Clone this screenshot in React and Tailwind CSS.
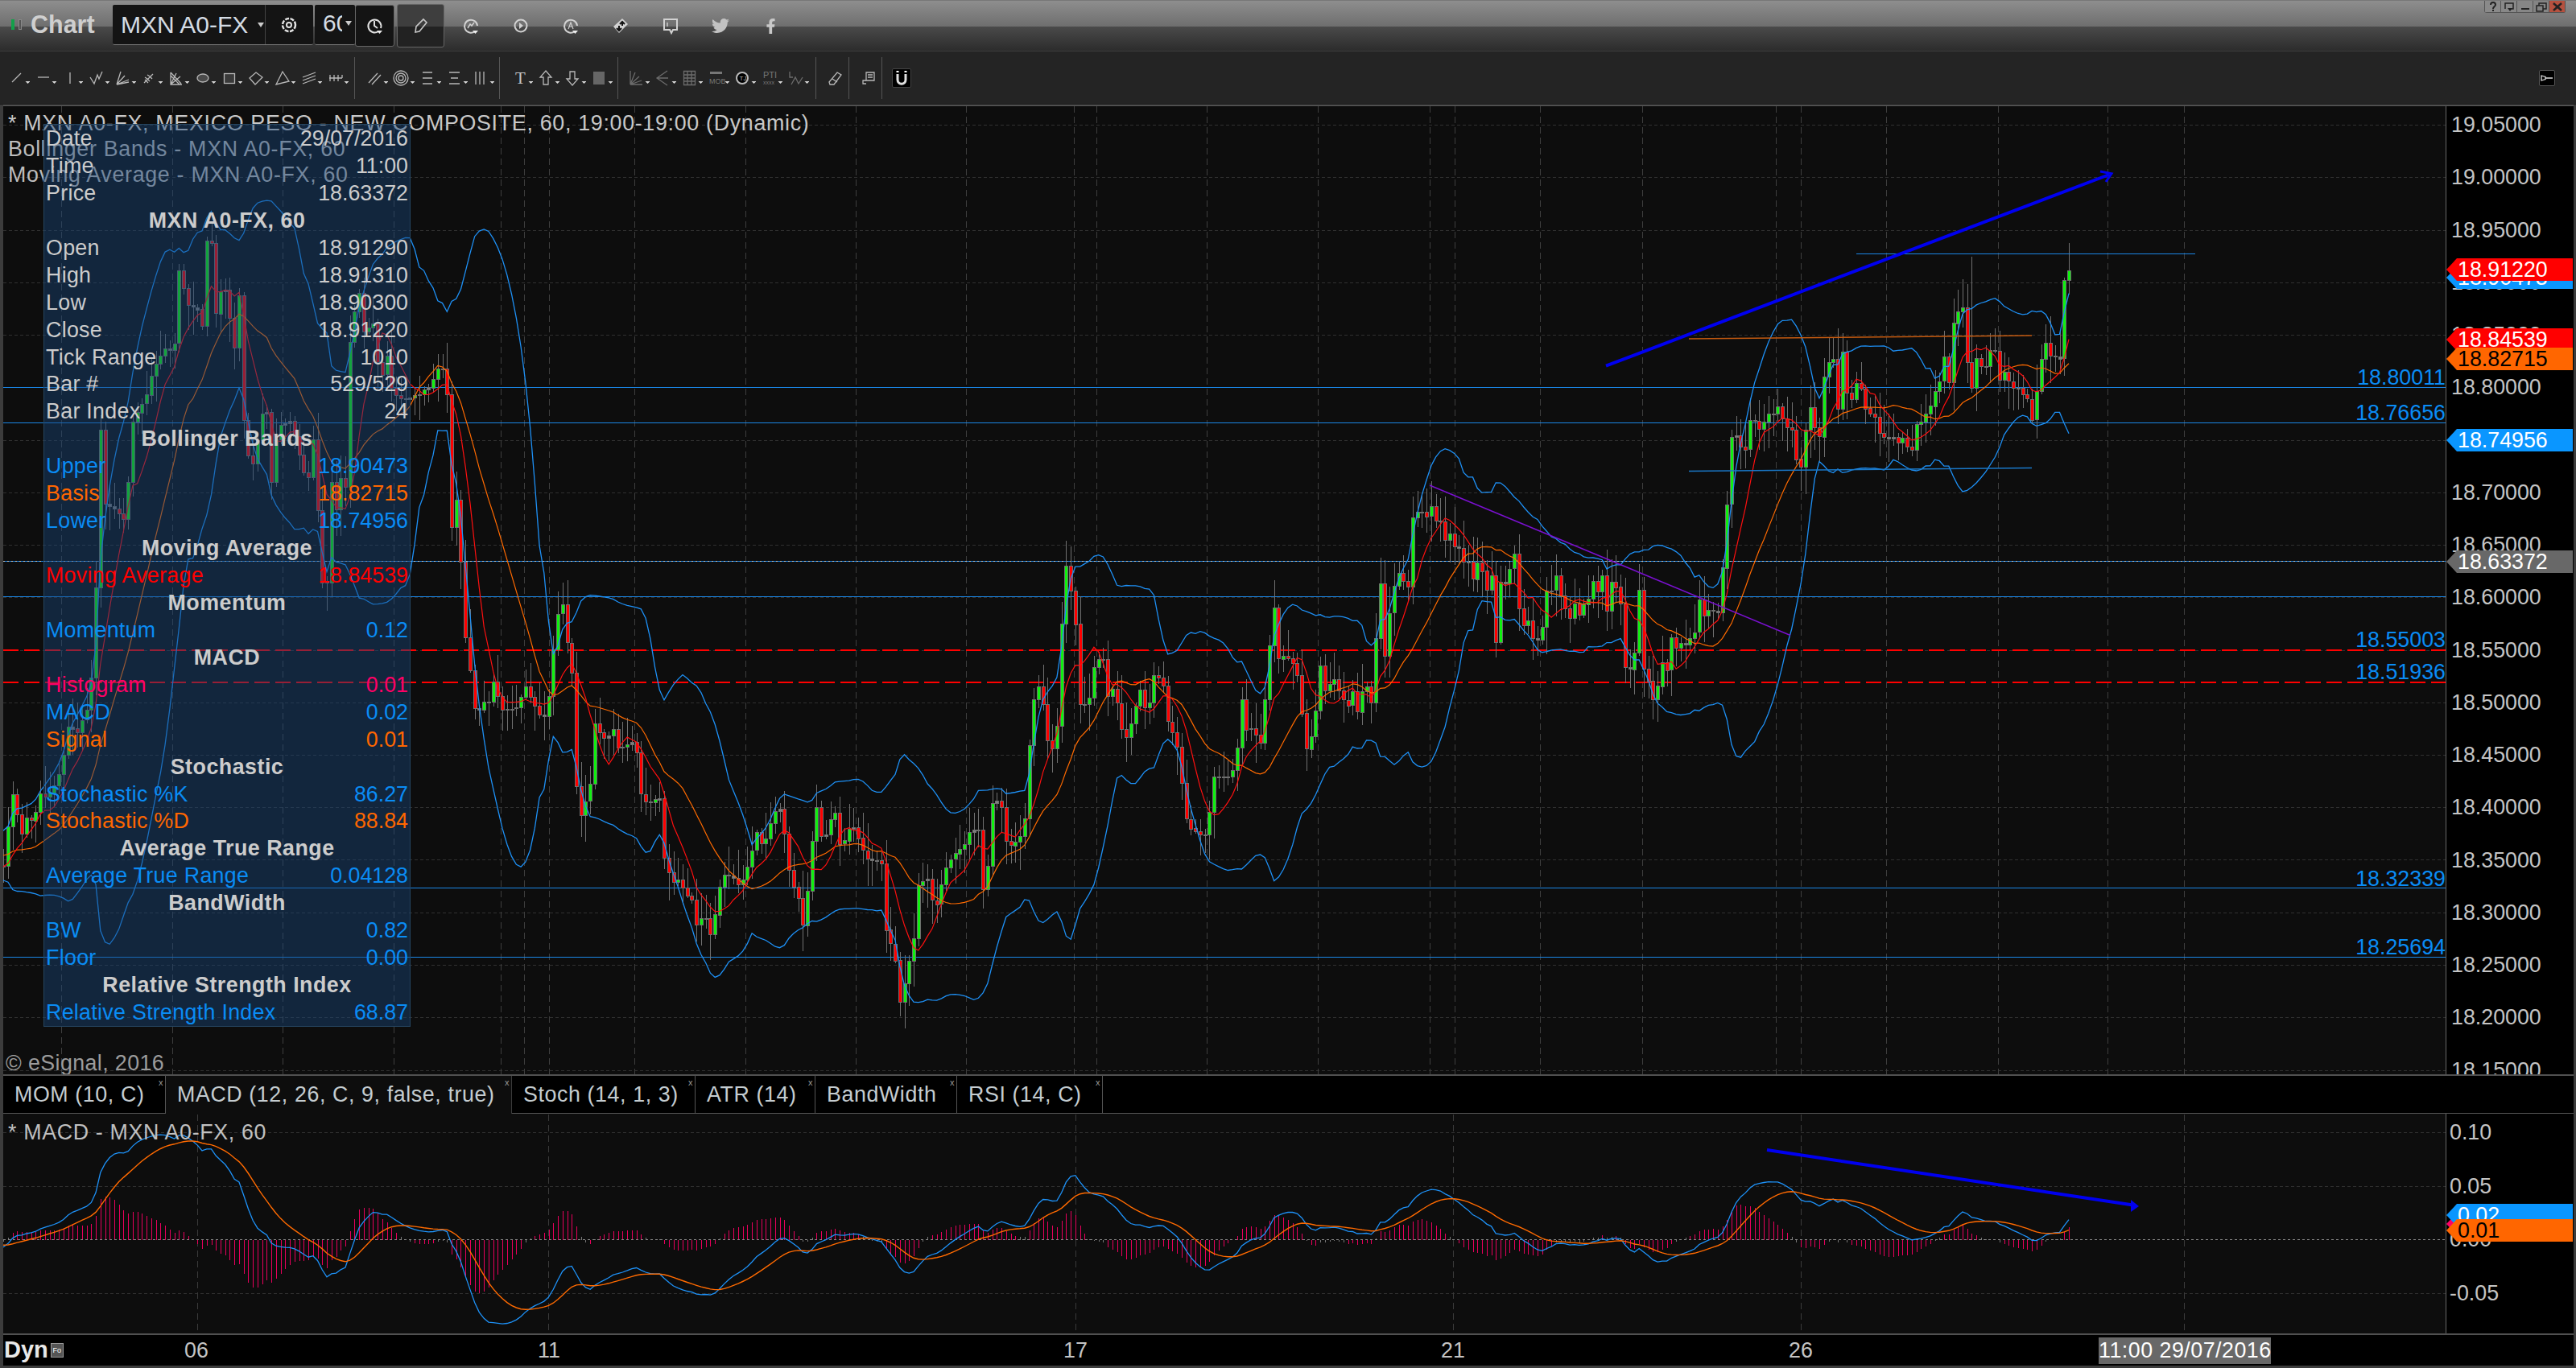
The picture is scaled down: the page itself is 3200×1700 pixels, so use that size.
import { FaTwitter, FaFacebookF } from 'react-icons/fa';

// traced closes: [x, y] in page pixels
const PATH = [[-120,1040],[-100,1060],[-80,1030],[-60,1075],[-40,1050],[-20,1090],[0,1075],[4,1078],[15,984],[27,1037],[33,1016],[39,1020],[45,1008],[50,986],[56,990],[62,985],[68,975],[74,960],[78,943],[85,900],[89,904],[96,910],[102,894],[107,886],[114,837],[119,731],[122,600],[125,528],[130,626],[143,632],[154,646],[161,583],[165,523],[182,491],[190,458],[205,433],[216,437],[222,335],[228,358],[234,380],[245,383],[252,408],[257,294],[262,294],[268,391],[274,362],[279,355],[286,398],[292,437],[297,366],[303,530],[310,576],[315,576],[326,512],[333,512],[338,617],[344,530],[355,526],[361,523],[377,587],[384,594],[389,544],[395,641],[400,723],[406,725],[411,594],[417,637],[423,594],[429,605],[435,416],[441,384],[446,362],[452,412],[464,401],[470,458],[475,466],[481,441],[487,487],[492,491],[500,496],[507,496],[513,491],[520,491],[527,484],[532,482],[539,469],[543,458],[549,455],[556,494],[561,655],[567,619],[572,690],[578,790],[584,833],[589,880],[596,882],[601,872],[607,872],[612,845],[624,882],[641,880],[653,853],[658,865],[671,890],[676,890],[682,863],[691,767],[699,751],[703,790],[710,830],[716,977],[722,1014],[733,977],[740,885],[746,917],[754,917],[763,905],[768,931],[779,925],[789,920],[796,986],[803,997],[810,997],[819,988],[825,1066],[835,1097],[844,1092],[851,1112],[859,1115],[865,1149],[875,1135],[883,1163],[889,1132],[895,1095],[900,1086],[910,1089],[918,1100],[925,1089],[934,1057],[942,1026],[947,1057],[958,1020],[967,997],[974,1034],[981,1089],[986,1103],[993,1120],[1000,1169],[1004,1086],[1014,1000],[1023,1057],[1028,1023],[1039,1008],[1044,1057],[1056,1026],[1061,1028],[1072,1057],[1079,1069],[1090,1069],[1098,1075],[1101,1169],[1110,1175],[1118,1247],[1125,1215],[1135,1166],[1141,1097],[1153,1092],[1161,1135],[1170,1097],[1176,1075],[1184,1063],[1198,1049],[1205,1031],[1216,1031],[1221,1106],[1230,1060],[1233,988],[1244,1003],[1251,1054],[1265,1043],[1272,1029],[1278,931],[1285,862],[1293,848],[1300,917],[1307,931],[1314,897],[1319,767],[1325,696],[1336,776],[1342,882],[1353,868],[1360,822],[1370,816],[1376,865],[1384,853],[1393,905],[1400,917],[1416,856],[1425,891],[1433,839],[1444,845],[1451,899],[1461,919],[1468,974],[1472,1014],[1479,1029],[1496,1040],[1503,1006],[1508,965],[1514,965],[1524,967],[1535,951],[1542,865],[1549,911],[1556,903],[1565,928],[1572,862],[1577,802],[1583,753],[1589,825],[1595,813],[1606,824],[1611,835],[1617,885],[1624,939],[1634,887],[1640,826],[1646,858],[1652,849],[1657,843],[1663,858],[1669,870],[1675,877],[1680,858],[1686,885],[1692,858],[1698,853],[1703,877],[1709,793],[1715,722],[1721,824],[1726,763],[1732,728],[1738,711],[1743,721],[1749,732],[1755,642],[1761,636],[1767,636],[1772,642],[1778,629],[1784,648],[1790,648],[1795,671],[1801,663],[1807,680],[1812,680],[1818,698],[1824,698],[1830,721],[1835,698],[1841,709],[1847,734],[1853,713],[1858,801],[1864,723],[1870,725],[1876,705],[1881,686],[1887,757],[1893,778],[1899,770],[1904,793],[1910,795],[1916,778],[1921,734],[1927,734],[1933,715],[1939,742],[1944,755],[1950,768],[1956,749],[1962,765],[1967,751],[1973,744],[1979,721],[1985,736],[1990,713],[1996,759],[2002,721],[2008,730],[2013,747],[2019,830],[2025,832],[2031,809],[2036,730],[2042,832],[2048,847],[2053,870],[2059,853],[2065,822],[2071,833],[2076,791],[2082,805],[2088,799],[2094,801],[2099,793],[2105,786],[2111,744],[2117,767],[2122,758],[2128,759],[2134,761],[2140,700],[2145,630],[2151,543],[2157,541],[2163,556],[2168,560],[2174,522],[2180,523],[2186,534],[2191,524],[2197,514],[2203,514],[2209,504],[2214,520],[2220,531],[2226,534],[2232,575],[2237,581],[2243,533],[2249,504],[2255,535],[2260,543],[2266,465],[2272,449],[2278,446],[2283,508],[2289,434],[2295,493],[2300,497],[2306,476],[2312,483],[2318,510],[2323,514],[2329,518],[2335,539],[2341,543],[2347,545],[2352,543],[2358,550],[2364,543],[2369,555],[2375,559],[2381,525],[2387,524],[2392,514],[2398,504],[2404,484],[2409,475],[2415,443],[2420,485],[2427,395],[2432,387],[2438,382],[2443,445],[2449,485],[2455,445],[2461,455],[2466,458],[2472,435],[2478,435],[2484,473],[2489,461],[2495,473],[2501,482],[2507,482],[2512,490],[2518,494],[2524,522],[2530,485],[2536,443],[2541,425],[2547,442],[2553,443],[2559,446],[2564,349],[2570,336]];

const STEP = 5.74;
const LAST_X = 2570;

function closeAt(x) {
  for (let i = 1; i < PATH.length; i++) {
    if (x <= PATH[i][0]) {
      const [x0, y0] = PATH[i - 1];
      const [x1, y1] = PATH[i];
      return y0 + ((y1 - y0) * (x - x0)) / (x1 - x0);
    }
  }
  return PATH[PATH.length - 1][1];
}

function noise(i) {
  const s = Math.sin(i * 12.9898) * 43758.5453;
  return s - Math.floor(s);
}

// the few wicks that stand out in the picture: [x, high y]
const TALL_WICKS = [[2570, 302], [2449, 319], [1325, 672], [2283, 408], [2145, 610]];

const bars = [];
for (let x = LAST_X; x >= -120; x -= STEP) bars.unshift({ x, close: closeAt(x) });
bars.forEach((b, i) => {
  b.open = i ? bars[i - 1].close : b.close;
  b.high = Math.min(b.open, b.close) - 3 - noise(i) * 32;
  b.low = Math.max(b.open, b.close) + 3 + noise(i + 700) * 32;
  TALL_WICKS.forEach(([x, y]) => {
    if (Math.abs(b.x - x) < 3) b.high = y;
  });
});

function sma(i, n) {
  let sum = 0;
  const from = Math.max(0, i - n + 1);
  for (let k = from; k <= i; k++) sum += bars[k].close;
  return sum / (i - from + 1);
}

function std(i, n, mean) {
  let sum = 0;
  const from = Math.max(0, i - n + 1);
  for (let k = from; k <= i; k++) sum += (bars[k].close - mean) ** 2;
  return Math.sqrt(sum / (i - from + 1));
}

function ema(values, n) {
  const k = 2 / (n + 1);
  const out = [];
  values.forEach((v, i) => out.push(i ? v * k + out[i - 1] * (1 - k) : v));
  return out;
}

const prices = bars.map((b) => 19.05 - (b.close - 155) / 1305);
const fast = ema(prices, 12);
const slow = ema(prices, 26);
const macd = fast.map((v, i) => v - slow[i]);
const signal = ema(macd, 12);
const macdY = (v) => 1540.5 - v * 1334;

const toPoints = (fn) => bars.map((b, i) => `${b.x.toFixed(1)},${fn(b, i).toFixed(1)}`).join(' ');

const basisPts = toPoints((b, i) => sma(i, 20));
const upperPts = toPoints((b, i) => { const m = sma(i, 20); return m - 2 * std(i, 20, m); });
const lowerPts = toPoints((b, i) => { const m = sma(i, 20); return m + 2 * std(i, 20, m); });
const maPts = toPoints((b, i) => sma(i, 8));
const macdPts = toPoints((b, i) => macdY(macd[i]));
const signalPts = toPoints((b, i) => macdY(signal[i]));

const VERTICALS = [76, 214, 351, 489, 622, 651, 682, 788, 926, 1063, 1200, 1334, 1362, 1499, 1637, 1776, 1807, 1913, 2040, 2206, 2237, 2343, 2482, 2618, 2713];
const MACD_VERTICALS = [245, 681, 1336, 1805, 2237, 2713];

const TICKS = ['19.05000', '19.00000', '18.95000', '18.90000', '18.85000', '18.80000', '18.75000', '18.70000', '18.65000', '18.60000', '18.55000', '18.50000', '18.45000', '18.40000', '18.35000', '18.30000', '18.25000', '18.20000', '18.15000'];
const priceY = (p) => 155 + (19.05 - p) * 1305;

const LEVELS = [
  ['18.80011', 469],
  ['18.76656', 513],
  ['18.55003', 795],
  ['18.51936', 835],
  ['18.32339', 1092],
  ['18.25694', 1177],
];

const BLUE = 'text-[#0a8cf5]';
const ROWS = [
  ['Date', '29/07/2016'],
  ['Time', '11:00'],
  ['Price', '18.63372'],
  ['MXN A0-FX, 60'],
  ['Open', '18.91290'],
  ['High', '18.91310'],
  ['Low', '18.90300'],
  ['Close', '18.91220'],
  ['Tick Range', '1010'],
  ['Bar #', '529/529'],
  ['Bar Index', '24'],
  ['Bollinger Bands'],
  ['Upper', '18.90473', BLUE],
  ['Basis', '18.82715', 'text-[#ff6600]'],
  ['Lower', '18.74956', BLUE],
  ['Moving Average'],
  ['Moving Average', '18.84539', 'text-[#ff0000]'],
  ['Momentum'],
  ['Momentum', '0.12', BLUE],
  ['MACD'],
  ['Histogram', '0.01', 'text-[#ff0066]'],
  ['MACD', '0.02', BLUE],
  ['Signal', '0.01', 'text-[#ff6600]'],
  ['Stochastic'],
  ['Stochastic %K', '86.27', BLUE],
  ['Stochastic %D', '88.84', 'text-[#ff6600]'],
  ['Average True Range'],
  ['Average True Range', '0.04128', BLUE],
  ['BandWidth'],
  ['BW', '0.82', BLUE],
  ['Floor', '0.00', BLUE],
  ['Relative Strength Index'],
  ['Relative Strength Index', '68.87', BLUE],
];

const TABS = [
  ['MOM (10, C)', 'w-[202px]'],
  ['MACD (12, 26, C, 9, false, true)', 'w-[430px]', true],
  ['Stoch (14, 1, 3)', 'w-[228px]'],
  ['ATR (14)', 'w-[149px]'],
  ['BandWidth', 'w-[176px]'],
  ['RSI (14, C)', 'w-[181px]'],
];

const Line = (props) => <line stroke="currentColor" {...props} />;

// toolbar glyphs, 33x30 cell, centred near 16,15
const DRAW_TOOLS = [
  <path d="M11 20 22 9" />,
  <path d="M10 14H24" />,
  <path d="M17 8V22" />,
  <path d="M9 14l5 8 4-11 2 5 4-9" />,
  <path d="M9 23 14 7M9 23 19 12M9 23 24 17M9 23 24 20" />,
  <path d="M10 21 21 10M11 14l3 2 3 3M14 11l3 2 3 3M15 21l-4-4" />,
  <path d="M10 8V23H24M10 8 23 22M10 12 21 23M10 23 17 9M10 23 22 13" />,
  <ellipse cx="17" cy="15" rx="7" ry="5" fill="#4a4a4a" />,
  <rect x="10.5" y="9.5" width="13" height="12" fill="#3a3a3a" />,
  <path d="M9 15 17 8 25 14 16 23Z" />,
  <path d="M17 7 25 19 9 23Z" />,
  <path d="M9 14 25 8M9 18 25 12M9 22 25 16" />,
  <path d="M9 15H25M10 11v8M15 11v8M20 11v8M25 11v4" />,
];
const FIB_TOOLS = [
  <path d="M9 21 20 9M13 23 24 11" />,
  <g><circle cx="16" cy="15" r="9" /><circle cx="16" cy="15" r="6" /><circle cx="16" cy="15" r="3" /></g>,
  <path d="M10 8H22M10 15H22M10 22H22" />,
  <path d="M10 8H23M12 15H21M10 22H23" />,
  <path d="M10 7V23M15 7V23M20 7V23" />,
];
const NOTE_TOOLS = [
  <text x="11" y="22" fontSize="21" fill="#c4c4c4" stroke="none" fontFamily="Liberation Serif, serif">T</text>,
  <path d="M16 6 23 14H19V23H13V14H9Z" />,
  <path d="M16 24 23 16H19V7H13V16H9Z" />,
  <rect x="9" y="7" width="14" height="16" fill="#666" stroke="none" />,
];
const DIM_TOOLS = [
  <path d="M9 23V6M9 23H24M9 23 15 8M9 23 20 13M9 23 23 18" />,
  <path d="M22 6 9 15 22 24M9 15H23" />,
  <path d="M9.5 6.5H23.5V23.5H9.5ZM14 7V23M19 7V23M10 11H23M10 15H23M10 19H23" />,
  <g><rect x="9" y="7" width="15" height="3" fill="#777" stroke="none" /><text x="8" y="22" fontSize="9" fill="#777" stroke="none">MOB</text></g>,
  <g><circle cx="16" cy="15" r="7" fill="#000" stroke="#bbb" strokeWidth="2" /><text x="12.5" y="18" fontSize="8" fill="#bbb" stroke="none">TJ</text></g>,
  <g><text x="9" y="15" fontSize="11" fill="#777" stroke="none">PTI</text><text x="9" y="23" fontSize="7" fill="#777" stroke="none">xxxx</text></g>,
  <path d="M9 7V14H13M11 23 16 14 20 22 25 14" />,
];

function ToolCell({ children, arrow = true, dim = false }) {
  return (
    <svg width="33" height="30" viewBox="0 0 33 30" className="shrink-0" fill="none" stroke={dim ? '#6c6c6c' : '#b8b8b8'} strokeWidth="1.3">
      {children}
      {arrow && <path d="M28 20h6l-3 3z" fill="#d8d8d8" stroke="none" transform="translate(-0.5 -1)" />}
    </svg>
  );
}

const Sep = ({ className = '' }) => <div className={`w-px h-[52px] bg-[#555] shrink-0 ${className}`} />;

function TitleIcon({ children, arrow }) {
  return (
    <div className="w-[62px] h-[62px] flex items-center justify-center shrink-0">
      <svg width="22" height="24" viewBox="0 0 22 24" fill="none" stroke="#d2d2d2" strokeWidth="2">
        {children}
        {arrow && <path d="M13 18h7l-3.5 4z" fill="#eee" stroke="none" />}
      </svg>
    </div>
  );
}

function WinButton({ children, className = '' }) {
  return (
    <div className={`w-[20px] h-[15px] flex items-center justify-center border-r border-b border-[#555] ${className}`}>
      <svg width="16" height="13" viewBox="0 0 16 13" fill="none" stroke="#222" strokeWidth="2">{children}</svg>
    </div>
  );
}

function TitleBar() {
  return (
    <div className="flex items-start h-[64px] shrink-0 bg-[linear-gradient(#8e8e8e_0px,#6e6e6e_32px,#4a4a4a_32px,#2c2c2c_62px,#3c3c3c_62px)] border-t border-[#777]">
      <div className="flex gap-[5px] ml-[14px] mt-[23px]">
        <div className="w-[4px] h-[13px] bg-[#13a04a]" />
        <div className="w-[4px] h-[13px] bg-[#555] border border-[#888]" />
      </div>
      <div className="ml-[11px] mt-[11px] text-[30.5px] leading-[36px] font-bold text-[#cfcfcf] w-[102px]">Chart</div>
      <div className="flex items-center w-[249px] h-[50px] mt-[5px] bg-[#141414] border-b border-[#777] rounded-[2px] overflow-hidden">
        <div className="w-[180px] pl-[10px] text-[30px] text-[#d4dce4] whitespace-nowrap">MXN A0-FX</div>
        <svg width="8" height="6" viewBox="0 0 8 6"><path d="M0 0h8L4 6z" fill="#ccc" /></svg>
        <div className="w-px h-full bg-[#444] ml-[1px]" />
        <svg className="ml-[16px]" width="26" height="26" viewBox="0 0 26 26" fill="none" stroke="#e4e4e4" strokeWidth="2.5">
          <circle cx="13" cy="13" r="8" strokeDasharray="5 1.5" />
          <circle cx="13" cy="13" r="3" strokeWidth="2" />
        </svg>
      </div>
      <div className="relative w-[50px] h-[50px] mt-[5px] ml-[2px] bg-[#141414] border-b border-[#777] rounded-[2px] pl-[10px] text-[30px] text-[#d4dce4]">
        <div className="w-[24px] overflow-hidden">60</div>
        <svg className="absolute right-[4px] top-[20px]" width="8" height="6" viewBox="0 0 8 6"><path d="M0 0h8L4 6z" fill="#ccc" /></svg>
      </div>
      <div className="w-[49px] h-[52px] mt-[5px] bg-[#141414] border border-[#666] rounded-[3px] flex items-center justify-center">
        <svg width="22" height="24" viewBox="0 0 22 24" fill="none" stroke="#e0e0e0" strokeWidth="2">
          <path d="M15 19A8 8 0 1 1 18 15" />
          <path d="M10 6v6l4 3" />
          <path d="M13 18h7l-3.5 4z" fill="#eee" stroke="none" />
        </svg>
      </div>
      <div className="w-[59px] h-[54px] mt-[4px] ml-[3px] bg-[linear-gradient(#3e3e3e_0px,#3e3e3e_27px,#222_27px,#222_54px)] border border-[#666] rounded-[3px] flex items-center justify-center">
        <svg width="18" height="20" viewBox="0 0 18 20" fill="none" stroke="#c8c8c8" strokeWidth="1.6">
          <path d="M2 18 3 11 12 2 16 6 7 17Z" />
        </svg>
      </div>
      <div className="flex ml-[2px]">
        <TitleIcon arrow><path d="M16 19A8 8 0 1 1 19 12" /><path d="M7 15l3-5 2 2 3-4" strokeWidth="1.5" /></TitleIcon>
        <TitleIcon><circle cx="11" cy="12" r="7.5" /><path d="M9 8l5 4-5 4z" fill="#d2d2d2" stroke="none" /></TitleIcon>
        <TitleIcon arrow><path d="M16 19A8 8 0 1 1 19 12" /><path d="M8 16l3-8 3 8M9 13h4" strokeWidth="1.2" /></TitleIcon>
        <TitleIcon><path d="M2 13 13 3 20 10 9 21Z" fill="#d2d2d2" stroke="none" /><path d="M13 7v5M10 10l3-3 3 3M9 12v5M6 15l3 3 3-3" stroke="#111" strokeWidth="2" /></TitleIcon>
        <TitleIcon><path d="M3 4H19V17H14L12 21 10 17H3Z" /><path d="M7 8v5" strokeWidth="1.4" /></TitleIcon>
        <div className="w-[62px] h-[62px] flex items-center justify-center shrink-0 text-[#c2c2c2]"><FaTwitter size={22} /></div>
        <div className="w-[62px] h-[62px] flex items-center justify-center shrink-0 text-[#c8c8c8]"><FaFacebookF size={19} /></div>
      </div>
      <div className="ml-auto mr-[13px] flex rounded-b-[3px] overflow-hidden border-l border-[#555]">
        <WinButton className="bg-[#8a8a8a]"><path d="M5 4c0-4 6-4 6 0 0 2-3 2-3 5M8 10v2" /></WinButton>
        <WinButton className="bg-[#888]"><path d="M3 9V2H13V9H10" strokeWidth="1.5" /><path d="M6 8h6l-3 4z" fill="#222" stroke="none" /></WinButton>
        <WinButton className="bg-[#868686]"><path d="M3 9H13" /></WinButton>
        <WinButton className="bg-[#848484]"><path d="M2 5H10V12H2ZM5 5V2H14V9H10" strokeWidth="1.5" /></WinButton>
        <WinButton className="bg-[#b5513f]"><path d="M3 2 13 11M13 2 3 11" strokeWidth="2.5" /></WinButton>
      </div>
    </div>
  );
}

function ToolBar() {
  return (
    <div className="flex items-center h-[66px] shrink-0 pl-[4px] pr-[26px] bg-[#242424] border-b border-[#1a1a1a]">
      {DRAW_TOOLS.map((g, i) => <ToolCell key={i}>{g}</ToolCell>)}
      <Sep className="ml-[7px] mr-[8px]" />
      {FIB_TOOLS.map((g, i) => <ToolCell key={i}>{g}</ToolCell>)}
      <Sep className="ml-[6px] mr-[8px]" />
      {NOTE_TOOLS.map((g, i) => <ToolCell key={i}>{g}</ToolCell>)}
      <Sep className="ml-[6px] mr-[6px]" />
      {DIM_TOOLS.map((g, i) => <ToolCell key={i} dim={i !== 4}>{g}</ToolCell>)}
      <Sep className="ml-[8px] mr-[7px]" />
      <ToolCell arrow={false}><path d="M9 20 19 8 24 11 15 23H10Z" /><path d="M13 16l6 4" /></ToolCell>
      <Sep className="mr-[8px]" />
      <ToolCell arrow={false}><path d="M13 8H23V18H13ZM15 11H21M15 14H21" /><path d="M13 18H9V22H13" /></ToolCell>
      <Sep className="-ml-px mr-[12px]" />
      <div className="w-[24px] h-[24px] bg-black border border-[#444] rounded-[2px] flex items-center justify-center shrink-0">
        <svg width="16" height="20" viewBox="0 0 16 20" fill="none" stroke="#e0e0e0" strokeWidth="3">
          <path d="M3 5V12C3 19 13 19 13 12V5" />
          <path d="M3 1V3M13 1V3" stroke="#fff" />
        </svg>
      </div>
      <div className="ml-auto w-[20px] h-[20px] bg-black border border-[#555] rounded-[2px] flex items-center justify-center">
        <svg width="16" height="10" viewBox="0 0 16 10" fill="none" stroke="#ddd" strokeWidth="1.3">
          <path d="M1 2 6 3.5V6.5L1 8ZM6 5H15" />
        </svg>
      </div>
    </div>
  );
}

function Candles() {
  return (
    <g shapeRendering="crispEdges">
      <path
        d={bars.map((b) => { const x = Math.round(b.x) + 0.5; return `M${x} ${b.high.toFixed(0)}V${b.low.toFixed(0)}`; }).join('')}
        stroke="#707070"
        fill="none"
      />
      {bars.map((b, i) => {
        const top = Math.min(b.open, b.close);
        const h = Math.max(1, Math.abs(b.open - b.close));
        const up = b.close < b.open;
        return (
          <rect
            key={i}
            x={Math.round(b.x) - 1.5}
            y={Math.round(top) + 0.5}
            width="4"
            height={Math.round(h)}
            fill={h < 3 ? '#808080' : up ? '#10f010' : '#ff0000'}
            stroke="#6e6e6e"
          />
        );
      })}
    </g>
  );
}

function MainChart() {
  return (
    <svg className="block w-[3034px] h-full text-[#1a86e6]" viewBox="4 132 3034 1203" fill="none">
      <g shapeRendering="crispEdges">
        {TICKS.map((t) => {
          const y = Math.round(priceY(parseFloat(t))) + 0.5;
          return <line key={t} x1="4" x2="3038" y1={y} y2={y} stroke="#303030" strokeDasharray="4 3" />;
        })}
        {VERTICALS.map((x) => (
          <line key={x} x1={x + 0.5} x2={x + 0.5} y1="132" y2="1335" stroke="#3e3e3e" strokeDasharray="8 5" />
        ))}
        <Line x1="4" x2="3038" y1="481.5" y2="481.5" />
        <Line x1="4" x2="3038" y1="525.5" y2="525.5" />
        <Line x1="4" x2="3038" y1="697.5" y2="697.5" />
        <line x1="4" x2="3038" y1="697.5" y2="697.5" stroke="#c8c8c8" strokeDasharray="2 3" />
        <Line x1="4" x2="3038" y1="741.5" y2="741.5" />
        <Line x1="4" x2="3038" y1="1103.5" y2="1103.5" />
        <Line x1="4" x2="3038" y1="1189.5" y2="1189.5" />
        <line x1="4" x2="3038" y1="808" y2="808" stroke="#ff0000" strokeWidth="2" strokeDasharray="19 7" />
        <line x1="4" x2="3038" y1="848" y2="848" stroke="#ff0000" strokeWidth="2" strokeDasharray="19 7" />
      </g>
      <Candles />
      <polyline points={upperPts} stroke="#1e90f5" strokeWidth="1.3" />
      <polyline points={lowerPts} stroke="#1e90f5" strokeWidth="1.3" />
      <polyline points={basisPts} stroke="#ff6a00" strokeWidth="1.2" />
      <polyline points={maPts} stroke="#ff1010" strokeWidth="1.2" />
      <line x1="2306" x2="2727" y1="315.5" y2="315.5" stroke="#1a86e6" />
      <line x1="2098" y1="421" x2="2524" y2="417" stroke="#c45a10" strokeWidth="1.5" />
      <line x1="2098" y1="585.5" x2="2524" y2="581.5" stroke="#1a78c8" strokeWidth="1.5" />
      <line x1="1776" y1="603" x2="2224" y2="789.5" stroke="#7a10d0" strokeWidth="1.5" />
      <line x1="1995" y1="454.6" x2="2620" y2="217" stroke="#0000f0" strokeWidth="4" />
      <path d="M2609 213 2623 215.7 2616 226" stroke="#0000f0" strokeWidth="3" />
    </svg>
  );
}

function MacdChart() {
  return (
    <svg className="block w-[3034px] h-full" viewBox="4 1384 3034 273" fill="none">
      <g shapeRendering="crispEdges">
        {[1407, 1474, 1607].map((y) => (
          <line key={y} x1="4" x2="3038" y1={y + 0.5} y2={y + 0.5} stroke="#303030" strokeDasharray="4 3" />
        ))}
        {MACD_VERTICALS.map((x) => (
          <line key={x} x1={x + 0.5} x2={x + 0.5} y1="1385" y2="1659" stroke="#3a3a3a" strokeDasharray="8 5" />
        ))}
        {bars.map((b, i) => {
          const h = (macd[i] - signal[i]) * 1.2 * 1334;
          const x = Math.round(b.x) + 0.5;
          return <line key={i} x1={x} x2={x} y1="1540.5" y2={1540.5 - h} stroke={Math.abs(h) < 4 ? '#777' : '#e8005c'} />;
        })}
        <line x1="4" x2="3038" y1="1540.5" y2="1540.5" stroke="#8a8a8a" strokeDasharray="3 3" />
      </g>
      <polyline points={macdPts} stroke="#1e92f8" strokeWidth="1.3" />
      <polyline points={signalPts} stroke="#ff6a00" strokeWidth="1.4" />
      <line x1="2195" y1="1429" x2="2653" y2="1498" stroke="#0000f0" strokeWidth="4" />
      <path d="M2647 1491 2657 1499 2647 1506Z" fill="#0000f0" />
    </svg>
  );
}

function DataPanel() {
  return (
    <div className="absolute left-[50px] top-[22px] w-[456px] bg-[rgba(24,69,120,0.45)] border border-[#25445f] pl-[2px] pr-[2px] text-[#cccccc]">
      {ROWS.map(([label, value, color], i) =>
        value ? (
          <div key={i} className={`flex justify-between h-[33.94px] leading-[34px] ${color || ''}`}>
            <span className="tracking-[0.3px]">{label}</span>
            <span>{value}</span>
          </div>
        ) : (
          <div key={i} className="h-[33.94px] leading-[34px] text-center font-bold tracking-[0.5px]">{label}</div>
        )
      )}
    </div>
  );
}

function Badge({ top, color, text = 'text-white', children }) {
  return (
    <div
      className={`absolute left-0 w-[157px] h-[28px] leading-[28px] pl-[14px] whitespace-nowrap [clip-path:polygon(13px_0,100%_0,100%_100%,13px_100%,0_50%)] ${color} ${text}`}
      style={{ top }}
    >
      {children}
    </div>
  );
}

export default function App() {
  return (
    <div className="w-[3200px] h-[1700px] flex flex-col overflow-hidden bg-black font-['Liberation_Sans',Arial,sans-serif] text-[26.8px]">
      <TitleBar />
      <ToolBar />
      <div className="flex-1 flex flex-col pl-[4px] pr-[3px] pb-[3px] bg-[#3c3c3c] min-h-0">
        {/* price pane */}
        <div className="flex h-[1207px] shrink-0 border-y-2 border-[#505050] bg-black">
          <div className="relative w-[3034px] bg-[#0d0d0d] overflow-hidden">
            <MainChart />
            <div className="absolute left-[6px] top-[5px] leading-[32px] text-[#bdbdbd] whitespace-nowrap tracking-[0.7px]">
              <div className="text-[#c8c8c8]">* MXN A0-FX, MEXICO PESO - NEW COMPOSITE, 60, 19:00-19:00 (Dynamic)</div>
              <div>Bollinger Bands - MXN A0-FX, 60</div>
              <div>Moving Average - MXN A0-FX, 60</div>
            </div>
            <DataPanel />
            {LEVELS.map(([label, y]) => (
              <div key={label} className="absolute right-0 leading-[32px] text-[#0a8cf5]" style={{ top: y - 148 }}>{label}</div>
            ))}
            <div className="absolute left-[3px] top-[1173px] leading-[32px] text-[#9c9c9c] tracking-[0.4px]">© eSignal, 2016</div>
          </div>
          <div className="relative flex-1 border-l border-[#666] overflow-hidden">
            {TICKS.map((t) => (
              <div key={t} className="absolute left-[6px] leading-[32px] text-[#c4c4c4]" style={{ top: priceY(parseFloat(t)) - 148 }}>{t}</div>
            ))}
            <Badge top={199} color="bg-[#0a96ff]">18.90473</Badge>
            <Badge top={189} color="bg-[#ff0000]">18.91220</Badge>
            <Badge top={276} color="bg-[#ff0000]">18.84539</Badge>
            <Badge top={300} color="bg-[#ff6600]" text="text-black">18.82715</Badge>
            <Badge top={401} color="bg-[#0a96ff]">18.74956</Badge>
            <Badge top={552} color="bg-[#686868]">18.63372</Badge>
          </div>
        </div>
        {/* indicator tabs */}
        <div className="flex h-[47px] shrink-0 bg-black border-b border-[#555]">
          {TABS.map(([label, w, active]) => (
            <div
              key={label}
              className={`relative h-[47px] pl-[14px] leading-[46px] whitespace-nowrap border-r border-[#3a3a3a] text-[#c4ccd0] tracking-[0.6px] ${w} ${active ? 'bg-[#0d0d0d]' : 'bg-black border-b border-[#555]'}`}
            >
              {label}
              <span className="absolute right-[2px] top-[2px] text-[11px] leading-[12px] text-[#999]">x</span>
            </div>
          ))}
        </div>
        {/* macd pane */}
        <div className="flex h-[275px] shrink-0 border-b-2 border-[#505050] bg-black">
          <div className="relative w-[3034px] bg-[#0d0d0d] overflow-hidden">
            <MacdChart />
            <div className="absolute left-[6px] top-[7px] leading-[32px] text-[#c0c0c0] tracking-[0.65px]">* MACD - MXN A0-FX, 60</div>
          </div>
          <div className="relative flex-1 border-l border-[#666] overflow-hidden">
            {[['0.10', 1407], ['0.05', 1474], ['0.00', 1540], ['-0.05', 1607]].map(([t, y]) => (
              <div key={t} className="absolute left-[4px] leading-[32px] text-[#c4c4c4]" style={{ top: y - 1400 }}>{t}</div>
            ))}
            <Badge top={123} color="bg-[#ff0066]">0.01</Badge>
            <Badge top={112} color="bg-[#0a96ff]">0.02</Badge>
            <Badge top={131} color="bg-[#ff6600]" text="text-black">0.01</Badge>
          </div>
        </div>
        {/* time axis */}
        <div className="relative flex-1 bg-black text-[#c4c4c4]">
          <div className="absolute left-[1px] top-[2px] flex items-center h-[34px]">
            <span className="font-bold text-[29px] text-[#e8e8e8]">Dyn</span>
            <span className="ml-[3px] w-[16px] h-[18px] border border-[#999] bg-[#555] text-[9px] leading-[16px] text-center text-white">Fo</span>
          </div>
          {[['06', 240], ['11', 678], ['17', 1332], ['21', 1801], ['26', 2233]].map(([t, x]) => (
            <div key={t} className="absolute top-[2px] leading-[34px] -translate-x-1/2" style={{ left: x }}>{t}</div>
          ))}
          <div className="absolute left-[2603px] top-[3px] w-[214px] h-[33px] leading-[33px] text-center bg-[#686868] text-white whitespace-nowrap tracking-[0.5px]">11:00 29/07/2016</div>
        </div>
      </div>
    </div>
  );
}
